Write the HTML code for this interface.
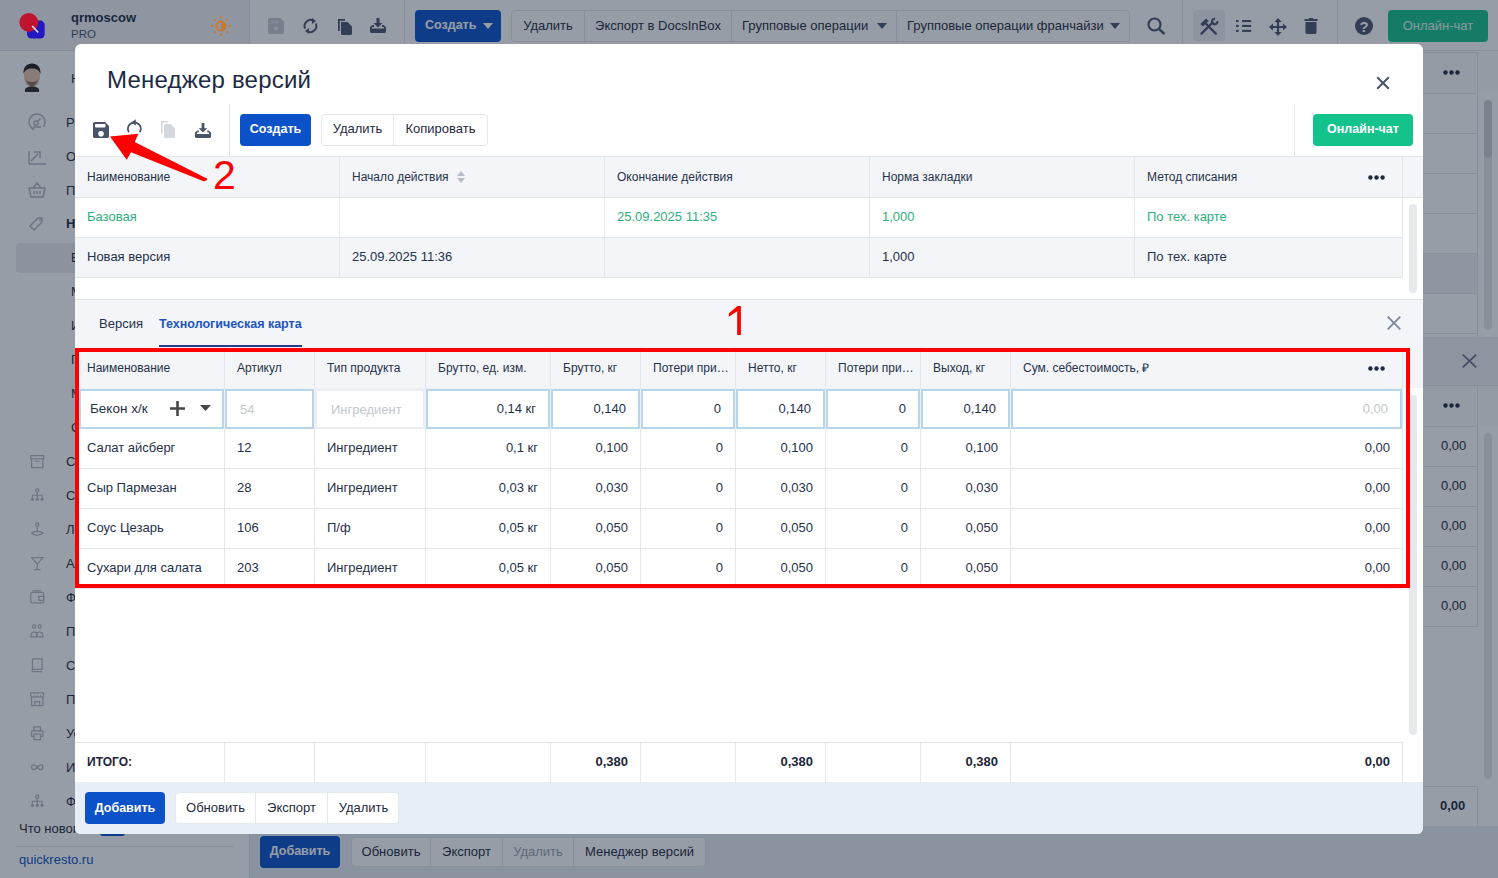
<!DOCTYPE html>
<html><head><meta charset="utf-8">
<style>
*{box-sizing:border-box;margin:0;padding:0}
html,body{width:1498px;height:878px;overflow:hidden}
body{position:relative;font-family:"Liberation Sans",sans-serif;color:#1f2a40;background:#fff}
.a{position:absolute}
.t{position:absolute;white-space:nowrap;line-height:1}
svg{position:absolute;overflow:visible}
#sidebar{position:absolute;left:0;top:0;width:250px;height:878px;background:#fff;border-right:1px solid #dfe3e9}
.si{position:absolute;left:0;width:250px;height:30px;font-size:13px;color:#1f2a40}
.si .tx{position:absolute;left:66px;top:9px;white-space:nowrap;line-height:1}
.si.sub .tx{left:71px}
#overlay{position:absolute;left:0;top:0;width:1498px;height:878px;background:rgba(20,33,55,0.445)}
#modal{position:absolute;left:75px;top:44px;width:1348px;height:790px;background:#fff;border-radius:6px;overflow:hidden}
.btn{position:absolute;height:32px;border-radius:4px;font-size:13px;line-height:32px;text-align:center;white-space:nowrap}
.bblue{background:#0b52c9;color:#fff;font-weight:bold}
.bgrp{position:absolute;height:32px;border:1px solid #e3e6eb;border-radius:4px;background:#fff;font-size:13px;line-height:30px;white-space:nowrap;color:#1f2a40}
.bgrp span{position:absolute;top:0;height:30px;text-align:center}
.bgrp span+span{border-left:1px solid #e3e6eb}
.c{position:absolute;white-space:nowrap;font-size:13px;line-height:1}
.hl{position:absolute;height:1px;background:#e3e6eb}
.vl{position:absolute;width:1px;background:#e3e6eb}
</style></head><body>
<!-- ============ BACKGROUND PAGE ============ -->
<div id="bgpage" class="a" style="left:0;top:0;width:1498px;height:878px">
  <!-- topbar -->
  <div class="a" style="left:250px;top:0;width:1248px;height:51px;background:#fff;border-bottom:1px solid #e3e6eb"></div>
  <div class="vl" style="left:404px;top:0;height:50px"></div>
  <div class="vl" style="left:1182px;top:0;height:50px"></div>
  <div class="vl" style="left:1337px;top:0;height:50px"></div>
  <!-- tb icons -->
  <svg style="left:268px;top:18px" width="16" height="16" viewBox="0 0 16 16"><path d="M0 1.8C0 .8.8 0 1.8 0H12.5l3.5 3.5v10.7c0 1-.8 1.8-1.8 1.8H1.8C.8 16 0 15.2 0 14.2z" fill="#c5cad3"/><rect x="3" y="2.5" width="8" height="3" fill="#fff" opacity=".35"/><circle cx="8" cy="10.5" r="2" fill="#fff" opacity=".5"/></svg>
  <svg style="left:303px;top:17px" width="15" height="18" viewBox="0 0 15 18"><path d="M2.2 11.5A6 6 0 0 1 11 4" stroke="#4a5570" stroke-width="2" fill="none"/><path d="M9 1l4 3-4 3z" fill="#4a5570"/><path d="M12.8 6.5A6 6 0 0 1 4 14" stroke="#4a5570" stroke-width="2" fill="none"/><path d="M6 17l-4-3 4-3z" fill="#4a5570"/></svg>
  <svg style="left:337px;top:18px" width="16" height="17" viewBox="0 0 16 17"><path d="M1 1h7v1.8H2.8V13H1z" fill="#4a5570"/><path d="M4 4h6.5L15 8.5V15.5c0 .8-.6 1.5-1.4 1.5H5.4C4.6 17 4 16.3 4 15.5z" fill="#4a5570"/></svg>
  <svg style="left:370px;top:18px" width="16" height="15" viewBox="0 0 16 15"><path d="M6.5 0h3v5h3L8 9.5 3.5 5h3z" fill="#4a5570"/><path d="M0 9l2.5-2h1.5v2H2.2L1.7 10.5h12.6L13.8 9H12V7h1.5L16 9v4.5c0 .8-.7 1.5-1.5 1.5h-13C.7 15 0 14.3 0 13.5z" fill="#4a5570"/></svg>
  <div class="btn bblue" style="left:415px;top:10px;width:86px;height:32px;line-height:31px;text-align:left;padding-left:10px;font-size:12.5px">Создать<svg style="left:68px;top:13px" width="10" height="6" viewBox="0 0 10 6"><path d="M0 0h10L5 6z" fill="#fff"/></svg></div>
  <div class="bgrp" style="left:511px;top:10px;width:619px;background:#fff">
    <span style="left:0;width:72px">Удалить</span>
    <span style="left:72px;width:147px">Экспорт в DocsInBox</span>
    <span style="left:219px;width:165px;text-align:left;padding-left:10px">Групповые операции<svg style="left:145px;top:12px" width="10" height="6" viewBox="0 0 10 6"><path d="M0 0h10L5 6z" fill="#4a5570"/></svg></span>
    <span style="left:384px;width:234px;text-align:left;padding-left:10px">Групповые операции франчайзи<svg style="left:213px;top:12px" width="10" height="6" viewBox="0 0 10 6"><path d="M0 0h10L5 6z" fill="#4a5570"/></svg></span>
  </div>
  <svg style="left:1147px;top:17px" width="19" height="18" viewBox="0 0 19 18"><circle cx="7.5" cy="7.5" r="6" stroke="#4a5570" stroke-width="2.2" fill="none"/><path d="M12 12l5.5 5" stroke="#4a5570" stroke-width="2.4"/></svg>
  <div class="a" style="left:1193px;top:10px;width:32px;height:31px;background:#eceff3;border-radius:3px"></div>
  <svg style="left:1200px;top:18px" width="19" height="17" viewBox="0 0 19 17"><path d="M15.8 15.6L6 5.8" stroke="#4a5570" stroke-width="2.3" stroke-linecap="round"/><path d="M6.1 0.4L8.6 2.9L2.9 8.6L0.4 6.1z" fill="#4a5570"/><path d="M1.5 15.6L12.6 4.5" stroke="#4a5570" stroke-width="2.3" stroke-linecap="round"/><path d="M17.3 3.1A2.7 2.7 0 1 1 15 0.9" stroke="#4a5570" stroke-width="2.2" fill="none"/></svg>
  <svg style="left:1236px;top:20px" width="16" height="12" viewBox="0 0 16 12"><g fill="#4a5570"><rect x="0" y="0" width="2.6" height="2.1"/><rect x="6" y="0" width="9.2" height="2.1"/><rect x="0" y="4.9" width="2.6" height="2.1"/><rect x="6" y="4.9" width="9.2" height="2.1"/><rect x="0" y="9.8" width="2.6" height="2.1"/><rect x="6" y="9.8" width="9.2" height="2.1"/></g></svg>
  <svg style="left:1268.5px;top:17.5px" width="18" height="18" viewBox="0 0 18 18"><path d="M9 0L12.6 4H10.1V7.9H14V5.4L18 9L14 12.6V10.1H10.1V14H12.6L9 18L5.4 14H7.9V10.1H4V12.6L0 9L4 5.4V7.9H7.9V4H5.4z" fill="#4a5570"/></svg>
  <svg style="left:1304px;top:18px" width="14" height="16" viewBox="0 0 14 16"><rect x="0.5" y="1" width="13" height="2" fill="#4a5570"/><rect x="5" y="0" width="4" height="2" fill="#4a5570"/><path d="M1.5 4h11v10.5c0 .8-.7 1.5-1.5 1.5H3c-.8 0-1.5-.7-1.5-1.5z" fill="#4a5570"/></svg>
  <svg style="left:1355px;top:17px" width="18" height="18" viewBox="0 0 18 18"><circle cx="9" cy="9" r="9" fill="#4a5570"/><text x="9" y="14.5" font-family="Liberation Sans" font-weight="bold" font-size="15" fill="#fff" text-anchor="middle">?</text></svg>
  <div class="btn" style="left:1388px;top:10px;width:100px;background:#14c28c;color:#e6f6ef;font-size:13px;line-height:31px">Онлайн-чат</div>
  <!-- right content area: top table -->
  <div class="a" style="left:250px;top:51px;width:1248px;height:286px;background:#fff"></div>
  <div class="hl" style="left:250px;top:52px;width:1228px"></div>
  <div class="a" style="left:250px;top:53px;width:1248px;height:40px;background:#fafbfc"></div>
  <div class="hl" style="left:250px;top:93px;width:1228px"></div>
  <div class="hl" style="left:250px;top:133px;width:1228px"></div>
  <div class="hl" style="left:250px;top:173px;width:1228px"></div>
  <div class="hl" style="left:250px;top:213px;width:1228px"></div>
  <div class="a" style="left:250px;top:253px;width:1227px;height:40px;background:#f1f3f6"></div>
  <div class="hl" style="left:250px;top:253px;width:1228px"></div>
  <div class="hl" style="left:250px;top:293px;width:1228px"></div>
  <div class="hl" style="left:250px;top:333px;width:1228px"></div>
  <div class="vl" style="left:1477px;top:52px;height:285px"></div>
  <svg style="left:1443px;top:70px" width="17" height="5" viewBox="0 0 17 5"><circle cx="2.5" cy="2.5" r="2.2" fill="#1f2a40"/><circle cx="8.5" cy="2.5" r="2.2" fill="#1f2a40"/><circle cx="14.5" cy="2.5" r="2.2" fill="#1f2a40"/></svg>
  <div class="a" style="left:1484px;top:100px;width:8px;height:230px;background:#e3e6eb;border-radius:4px"></div>
  <div class="a" style="left:1484px;top:100px;width:8px;height:58px;background:#c9ced6;border-radius:4px"></div>
  <!-- right content area: second panel -->
  <div class="a" style="left:250px;top:337px;width:1248px;height:489px;background:#fff"></div>
  <div class="a" style="left:250px;top:337px;width:1248px;height:49px;background:#eff1f4"></div>
  <svg style="left:1462px;top:354px" width="15" height="14" viewBox="0 0 15 14"><path d="M.8 .6l13.4 12.8M14.2 .6L.8 13.4" stroke="#65718a" stroke-width="1.7"/></svg>
  <div class="hl" style="left:250px;top:385px;width:1248px"></div>
  <div class="a" style="left:250px;top:386px;width:1248px;height:40px;background:#fafbfc"></div>
  <div class="hl" style="left:250px;top:426px;width:1228px"></div>
  <div class="hl" style="left:250px;top:466px;width:1228px"></div>
  <div class="hl" style="left:250px;top:506px;width:1228px"></div>
  <div class="hl" style="left:250px;top:546px;width:1228px"></div>
  <div class="hl" style="left:250px;top:586px;width:1228px"></div>
  <div class="hl" style="left:250px;top:626px;width:1228px"></div>
  <div class="vl" style="left:1477px;top:386px;height:240px"></div>
  <svg style="left:1443px;top:403px" width="17" height="5" viewBox="0 0 17 5"><circle cx="2.5" cy="2.5" r="2.2" fill="#1f2a40"/><circle cx="8.5" cy="2.5" r="2.2" fill="#1f2a40"/><circle cx="14.5" cy="2.5" r="2.2" fill="#1f2a40"/></svg>
  <div class="c" style="left:1441px;top:439px">0,00</div>
  <div class="c" style="left:1441px;top:479px">0,00</div>
  <div class="c" style="left:1441px;top:519px">0,00</div>
  <div class="c" style="left:1441px;top:559px">0,00</div>
  <div class="c" style="left:1441px;top:599px">0,00</div>
  <div class="a" style="left:1484px;top:433px;width:8px;height:346px;background:#e3e6eb;border-radius:4px"></div>
  <div class="hl" style="left:250px;top:786px;width:1228px"></div>
  <div class="vl" style="left:1477px;top:786px;height:40px"></div>
  <div class="c" style="left:1440px;top:799px;font-weight:bold">0,00</div>
  <!-- bottom toolbar -->
  <div class="a" style="left:250px;top:826px;width:1248px;height:52px;background:#e8eef5"></div>
  <div class="btn bblue" style="left:260px;top:836px;width:80px;height:32px;font-size:12.5px;line-height:31px">Добавить</div>
  <div class="bgrp" style="left:351px;top:837px;width:355px;height:30px">
    <span style="left:0;width:78px;height:28px;line-height:28px">Обновить</span>
    <span style="left:78px;width:72px;height:28px;line-height:28px">Экспорт</span>
    <span style="left:150px;width:71px;height:28px;line-height:28px;color:#9aa2ae">Удалить</span>
    <span style="left:221px;width:132px;height:28px;line-height:28px">Менеджер версий</span>
  </div>
  <!-- sidebar -->
  <div id="sidebar">
    <div class="a" style="left:0;top:0;width:249px;height:50px;background:#f1f3f6"></div><div class="a" style="left:0;top:50px;width:249px;height:1px;background:#dde1e7"></div>
    
    <div class="t" style="left:71px;top:11px;font-size:13px;font-weight:bold;color:#1c2b45">qrmoscow</div>
    <div class="t" style="left:71px;top:29px;font-size:11.5px;color:#46526a">PRO</div>
    
    <!-- avatar -->
    <svg style="left:22px;top:63px" width="20" height="29" viewBox="0 0 20 29"><path d="M2 9C2 3 6 1 10 1s8 2 8 8v4c0 6-3 11-8 11S2 19 2 13z" fill="#e6c3ad"/><path d="M1.5 11C1 4 5 0.5 10 0.5S19 4 18.5 11C17 7 15 5.5 10 5.5S3 7 1.5 11z" fill="#231d1b"/><path d="M3.5 15c1 5 3.5 8 6.5 8s5.5-3 6.5-8c-1 3-3 4-6.5 4s-5.5-1-6.5-4z" fill="#8a6a5c"/><path d="M3 26c2-2 4-2.5 7-2.5s5 .5 7 2.5v3H3z" fill="#2b2a2e"/></svg>
    <div class="t" style="left:71px;top:72px;font-size:13px">Никита Петров</div>
    <div class="si" style="top:107px"><svg style="left:28px;top:6px" width="18" height="18" viewBox="0 0 18 18"><circle cx="9" cy="9" r="8" stroke="#b0b7c1" stroke-width="1.5" fill="none" stroke-dasharray="40 10" transform="rotate(110 9 9)"/><circle cx="8" cy="10" r="2" stroke="#b0b7c1" stroke-width="1.5" fill="none"/><path d="M9.5 8.5l3-3M5 14h8" stroke="#b0b7c1" stroke-width="1.5"/></svg><div class="tx" style="">Рабочий стол</div></div>
    <div class="si" style="top:141px"><svg style="left:28px;top:6px" width="18" height="18" viewBox="0 0 18 18"><path d="M1 17V4M1 17h17M3 14l7-7M6 5h6v6" stroke="#b0b7c1" stroke-width="1.5" fill="none"/></svg><div class="tx" style="">Отчёты</div></div>
    <div class="si" style="top:175px"><svg style="left:28px;top:6px" width="18" height="18" viewBox="0 0 18 18"><path d="M1 7h16l-2 9H3z M5 7l4-5 4 5M6 10v3M9 10v3M12 10v3" stroke="#b0b7c1" stroke-width="1.5" fill="none"/></svg><div class="tx" style="">Продажи</div></div>
    <div class="si" style="top:208px"><svg style="left:28px;top:6px" width="18" height="18" viewBox="0 0 18 18"><path d="M2 12l8-8h4v4l-8 8z" stroke="#b0b7c1" stroke-width="1.5" fill="none"/><circle cx="12" cy="6" r="1" fill="#b0b7c1"/></svg><div class="tx" style="font-weight:bold;">Номенклатура</div></div>
    <div class="a" style="left:16px;top:243px;width:234px;height:30px;background:#eaedf2;border-radius:4px 0 0 4px"></div>
    <div class="si sub" style="top:242px"><div class="tx" style="">Блюда и товары</div></div>
    <div class="si sub" style="top:276px"><div class="tx" style="">Модификаторы</div></div>
    <div class="si sub" style="top:310px"><div class="tx" style="">Ингредиенты</div></div>
    <div class="si sub" style="top:344px"><div class="tx" style="">Полуфабрикаты</div></div>
    <div class="si sub" style="top:378px"><div class="tx" style="">Меню</div></div>
    <div class="si sub" style="top:412px"><div class="tx" style="">Списки</div></div>
    <div class="si" style="top:446px"><svg style="left:30px;top:8px" width="14.5" height="14.5" viewBox="0 0 18 18"><rect x="1" y="2" width="16" height="4" stroke="#b0b7c1" stroke-width="1.5" fill="none"/><path d="M2 6v11h14V6M6 9h6" stroke="#b0b7c1" stroke-width="1.5" fill="none"/></svg><div class="tx" style="">Склад</div></div>
    <div class="si" style="top:480px"><svg style="left:30px;top:8px" width="14.5" height="14.5" viewBox="0 0 18 18"><circle cx="9" cy="3" r="2" stroke="#b0b7c1" stroke-width="1.5" fill="none"/><path d="M9 5v4M3 12V9h12v3M9 9v3" stroke="#b0b7c1" stroke-width="1.5" fill="none"/><circle cx="3" cy="14" r="2" fill="#b0b7c1"/><circle cx="9" cy="14" r="2" fill="#b0b7c1"/><circle cx="15" cy="14" r="2" fill="#b0b7c1"/></svg><div class="tx" style="">Структура</div></div>
    <div class="si" style="top:514px"><svg style="left:30px;top:8px" width="14.5" height="14.5" viewBox="0 0 18 18"><circle cx="9" cy="3" r="2" stroke="#b0b7c1" stroke-width="1.5" fill="none"/><path d="M9 6v6M2 14c3-3 11-3 14 0-3 3-11 3-14 0z" stroke="#b0b7c1" stroke-width="1.5" fill="none"/></svg><div class="tx" style="">Лояльность</div></div>
    <div class="si" style="top:548px"><svg style="left:30px;top:8px" width="14.5" height="14.5" viewBox="0 0 18 18"><path d="M2 2h14L9 10zM9 10v6M5 17h8" stroke="#b0b7c1" stroke-width="1.5" fill="none"/></svg><div class="tx" style="">Алкоголь</div></div>
    <div class="si" style="top:582px"><svg style="left:30px;top:8px" width="14.5" height="14.5" viewBox="0 0 18 18"><rect x="1" y="3" width="16" height="13" rx="2" stroke="#b0b7c1" stroke-width="1.5" fill="none"/><path d="M3 1h11M11 8h6v5h-6z" stroke="#b0b7c1" stroke-width="1.5" fill="none"/></svg><div class="tx" style="">Финансы</div></div>
    <div class="si" style="top:616px"><svg style="left:30px;top:8px" width="14.5" height="14.5" viewBox="0 0 18 18"><circle cx="5" cy="3" r="2" stroke="#b0b7c1" stroke-width="1.5" fill="none"/><circle cx="12" cy="3" r="2" stroke="#b0b7c1" stroke-width="1.5" fill="none"/><path d="M1 16c0-8 8-8 8 0zM8 16c0-8 8-8 8 0z" stroke="#b0b7c1" stroke-width="1.5" fill="none"/></svg><div class="tx" style="">Персонал</div></div>
    <div class="si" style="top:650px"><svg style="left:30px;top:8px" width="14.5" height="14.5" viewBox="0 0 18 18"><path d="M3 1h12v13H4a1.5 1.5 0 0 0 0 3h11M3 1v14.5" stroke="#b0b7c1" stroke-width="1.5" fill="none"/></svg><div class="tx" style="">Справочники</div></div>
    <div class="si" style="top:684px"><svg style="left:30px;top:8px" width="14.5" height="14.5" viewBox="0 0 18 18"><path d="M1 1h16v4c0 2-3 2-4 0-1 2-3 2-4 0-1 2-3 2-4 0-1 2-4 2-4 0zM2 6v11h14V6M6 17v-5h6v5" stroke="#b0b7c1" stroke-width="1.5" fill="none"/></svg><div class="tx" style="">Предприятие</div></div>
    <div class="si" style="top:718px"><svg style="left:30px;top:8px" width="14.5" height="14.5" viewBox="0 0 18 18"><path d="M5 6V1h8v5M2 6h14v7h-3M5 13H2V6M5 10h8v7H5z" stroke="#b0b7c1" stroke-width="1.5" fill="none"/></svg><div class="tx" style="">Устройства</div></div>
    <div class="si" style="top:752px"><svg style="left:30px;top:8px" width="14.5" height="14.5" viewBox="0 0 18 18"><path d="M9 9c-3-4-7-4-7 0s4 4 7 0 7-4 7 0-4 4-7 0z" stroke="#b0b7c1" stroke-width="1.6" fill="none"/></svg><div class="tx" style="">Интеграции</div></div>
    <div class="si" style="top:786px"><svg style="left:30px;top:8px" width="14.5" height="14.5" viewBox="0 0 18 18"><circle cx="9" cy="3" r="2" stroke="#b0b7c1" stroke-width="1.5" fill="none"/><path d="M9 5v4M3 12V9h12v3M9 9v3" stroke="#b0b7c1" stroke-width="1.5" fill="none"/><circle cx="3" cy="14" r="2" fill="#b0b7c1"/><circle cx="9" cy="14" r="2" fill="#b0b7c1"/><circle cx="15" cy="14" r="2" fill="#b0b7c1"/></svg><div class="tx" style="">Франчайзи</div></div>
    <div class="t" style="left:19px;top:822px;font-size:13px">Что нового</div>
    <div class="a" style="left:100px;top:820px;width:25px;height:16px;border-radius:3px;background:#0b52c9"></div>
    <div class="hl" style="left:16px;top:846px;width:218px"></div>
    <div class="t" style="left:19px;top:853px;font-size:13px;color:#0b4fc2">quickresto.ru</div>
  </div>
</div>

<div id="overlay"></div>
<svg style="left:19px;top:12px" width="27" height="28" viewBox="0 0 27 28"><rect x="8" y="8.6" width="17.7" height="18" rx="4.5" fill="#2418c0"/><circle cx="9.8" cy="10.4" r="9.4" fill="#c0132f"/><path d="M13.2 14l6 6.5" stroke="#d5d8e0" stroke-width="1.8"/></svg>
<svg style="left:211px;top:16px" width="20" height="20" viewBox="0 0 20 20"><g fill="#c97a2a"><circle cx="10" cy="1.3" r="1.2"/><circle cx="10" cy="18.7" r="1.2"/><circle cx="1.3" cy="10" r="1.2"/><circle cx="18.7" cy="10" r="1.2"/><circle cx="3.8" cy="3.8" r="1.1"/><circle cx="16.2" cy="3.8" r="1.1"/><circle cx="3.8" cy="16.2" r="1.1"/><circle cx="16.2" cy="16.2" r="1.1"/></g><circle cx="10" cy="10" r="4.6" stroke="#c97a2a" stroke-width="1.6" fill="none"/><path d="M10 5.4a4.6 4.6 0 0 1 0 9.2z" fill="#c97a2a"/></svg>

<div id="modal">
<div class="a" style="left:-75px;top:-44px;width:1498px;height:878px">
<div class="t" style="left:107px;top:68px;font-size:24px;color:#1c2b45;letter-spacing:0.2px">Менеджер версий</div>
<svg style="left:1376px;top:76px" width="14" height="14" viewBox="0 0 14 14"><path d="M1.2 1.2l11.6 11.6M12.8 1.2L1.2 12.8" stroke="#4a5468" stroke-width="2"/></svg>
<svg style="left:93px;top:122px" width="16" height="16" viewBox="0 0 16 16"><path d="M0 1.8C0 .8.8 0 1.8 0H12l4 4v10.2c0 1-.8 1.8-1.8 1.8H1.8C.8 16 0 15.2 0 14.2z" fill="#4a5468"/><rect x="2" y="2" width="10.5" height="3.4" rx=".8" fill="#fff"/><circle cx="8" cy="11.8" r="2.8" fill="#fff"/></svg>
<svg style="left:0;top:0" width="220" height="160" viewBox="0 0 220 160"><path d="M139.8 132.2A6.4 6.4 0 1 0 128.9 132.2" stroke="#4a5468" stroke-width="1.9" fill="none"/><path d="M131.2 122.4L135.8 119.3V125.6z" fill="#4a5468"/></svg>
<svg style="left:161px;top:121px" width="15" height="17" viewBox="0 0 15 17"><path d="M0 0h7v1.6H1.6V12H0z" fill="#d3d7de"/><path d="M3 3h6.5L14 7.5V15.6c0 .8-.6 1.4-1.4 1.4H4.4C3.6 17 3 16.4 3 15.6z" fill="#d3d7de"/></svg>
<svg style="left:195px;top:123px" width="16" height="15" viewBox="0 0 16 15"><path d="M6.6 0h2.8v5.2h3L8 9.6 3.6 5.2h3z" fill="#4a5468"/><path d="M0 9.5L2.4 7.5h1.4v1.8H2.4L1.8 11h12.4l-.6-1.7h-1.4V7.5h1.4L16 9.5v4c0 .8-.7 1.5-1.5 1.5h-13C.7 15 0 14.3 0 13.5z" fill="#4a5468"/></svg>
<div class="a" style="left:229px;top:104px;width:1px;height:52px;background:#e3e6eb;"></div>
<div class="a" style="left:1294px;top:104px;width:1px;height:52px;background:#e3e6eb;"></div>
<div class="btn bblue" style="left:240px;top:114px;width:71px;height:32px;line-height:30px;font-size:12.5px">Создать</div>
<div class="bgrp" style="left:321px;top:114px;width:167px;height:32px;line-height:28px"><span style="left:0;width:71px">Удалить</span><span style="left:71px;width:94px">Копировать</span></div>
<div class="btn" style="left:1313px;top:114px;width:100px;height:32px;line-height:30px;background:#14c28c;color:#fff;font-weight:bold;font-size:12.5px">Онлайн-чат</div>
<div class="a" style="left:75px;top:156px;width:1348px;height:1px;background:#e3e6eb;"></div>
<div class="a" style="left:75px;top:157px;width:1348px;height:40px;background:#f3f5f8;"></div>
<div class="a" style="left:75px;top:197px;width:1348px;height:1px;background:#e3e6eb;"></div>
<div class="a" style="left:75px;top:237px;width:1327px;height:1px;background:#e3e6eb;"></div>
<div class="a" style="left:75px;top:238px;width:1327px;height:39px;background:#f3f5f8;"></div>
<div class="a" style="left:75px;top:277px;width:1327px;height:1px;background:#e3e6eb;"></div>
<div class="a" style="left:339px;top:157px;width:1px;height:120px;background:#e3e6eb;"></div>
<div class="a" style="left:604px;top:157px;width:1px;height:120px;background:#e3e6eb;"></div>
<div class="a" style="left:869px;top:157px;width:1px;height:120px;background:#e3e6eb;"></div>
<div class="a" style="left:1134px;top:157px;width:1px;height:120px;background:#e3e6eb;"></div>
<div class="a" style="left:1402px;top:157px;width:1px;height:120px;background:#e3e6eb;"></div>
<div class="t" style="left:87px;top:171.22px;font-size:12px;color:#26314a;">Наименование</div>
<div class="t" style="left:352px;top:171.22px;font-size:12px;color:#26314a;">Начало действия</div>
<svg style="left:457px;top:171px" width="8" height="12" viewBox="0 0 8 12"><path d="M0 5h8L4 0zM0 7h8l-4 5z" fill="#b7bdc7"/></svg>
<div class="t" style="left:617px;top:171.22px;font-size:12px;color:#26314a;">Окончание действия</div>
<div class="t" style="left:882px;top:171.22px;font-size:12px;color:#26314a;">Норма закладки</div>
<div class="t" style="left:1147px;top:171.22px;font-size:12px;color:#26314a;">Метод списания</div>
<svg style="left:1368px;top:175px" width="17" height="5" viewBox="0 0 17 5"><circle cx="2.4" cy="2.5" r="2.2" fill="#1f2a40"/><circle cx="8.5" cy="2.5" r="2.2" fill="#1f2a40"/><circle cx="14.6" cy="2.5" r="2.2" fill="#1f2a40"/></svg>
<div class="t" style="left:87px;top:209.73px;font-size:13px;color:#2eae7e;">Базовая</div>
<div class="t" style="left:617px;top:209.73px;font-size:13px;color:#2eae7e;">25.09.2025 11:35</div>
<div class="t" style="left:882px;top:209.73px;font-size:13px;color:#2eae7e;">1,000</div>
<div class="t" style="left:1147px;top:209.73px;font-size:13px;color:#2eae7e;">По тех. карте</div>
<div class="t" style="left:87px;top:249.73px;font-size:13px;color:#26314a;">Новая версия</div>
<div class="t" style="left:352px;top:249.73px;font-size:13px;color:#26314a;">25.09.2025 11:36</div>
<div class="t" style="left:882px;top:249.73px;font-size:13px;color:#26314a;">1,000</div>
<div class="t" style="left:1147px;top:249.73px;font-size:13px;color:#26314a;">По тех. карте</div>
<div class="a" style="left:1409px;top:204px;width:8px;height:89px;background:#e6e9ee;border-radius:4px"></div>
<div class="a" style="left:75px;top:299px;width:1348px;height:1px;background:#e1e4e9;"></div>
<div class="a" style="left:75px;top:300px;width:1348px;height:47px;background:#f3f5f8;"></div>
<div class="t" style="left:99px;top:316.73px;font-size:13px;color:#26314a;">Версия</div>
<div class="t" style="left:159px;top:317.98px;font-size:12.5px;color:#1d55c0;font-weight:bold;">Технологическая карта</div>
<div class="a" style="left:159px;top:345px;width:143px;height:2px;background:#2b3a8f;"></div>
<svg style="left:1387px;top:316px" width="14" height="14" viewBox="0 0 14 14"><path d="M.7 .7l12.6 12.6M13.3 .7L.7 13.3" stroke="#7d8797" stroke-width="1.8"/></svg>
<div class="a" style="left:75px;top:347px;width:1348px;height:41px;background:#f3f5f8;"></div>
<div class="a" style="left:75px;top:388px;width:1327px;height:1px;background:#e3e6eb;"></div>
<div class="a" style="left:75px;top:428px;width:1327px;height:1px;background:#e3e6eb;"></div>
<div class="a" style="left:75px;top:468px;width:1327px;height:1px;background:#e3e6eb;"></div>
<div class="a" style="left:75px;top:508px;width:1327px;height:1px;background:#e3e6eb;"></div>
<div class="a" style="left:75px;top:548px;width:1327px;height:1px;background:#e3e6eb;"></div>
<div class="a" style="left:75px;top:588px;width:1327px;height:1px;background:#e3e6eb;"></div>
<div class="a" style="left:224px;top:347px;width:1px;height:241px;background:#e3e6eb;"></div>
<div class="a" style="left:314px;top:347px;width:1px;height:241px;background:#e3e6eb;"></div>
<div class="a" style="left:425px;top:347px;width:1px;height:241px;background:#e3e6eb;"></div>
<div class="a" style="left:550px;top:347px;width:1px;height:241px;background:#e3e6eb;"></div>
<div class="a" style="left:640px;top:347px;width:1px;height:241px;background:#e3e6eb;"></div>
<div class="a" style="left:735px;top:347px;width:1px;height:241px;background:#e3e6eb;"></div>
<div class="a" style="left:825px;top:347px;width:1px;height:241px;background:#e3e6eb;"></div>
<div class="a" style="left:920px;top:347px;width:1px;height:241px;background:#e3e6eb;"></div>
<div class="a" style="left:1010px;top:347px;width:1px;height:241px;background:#e3e6eb;"></div>
<div class="a" style="left:1402px;top:347px;width:1px;height:241px;background:#e3e6eb;"></div>
<div class="t" style="left:87px;top:362.22px;font-size:12px;color:#26314a;">Наименование</div>
<div class="t" style="left:237px;top:362.22px;font-size:12px;color:#26314a;">Артикул</div>
<div class="t" style="left:327px;top:362.22px;font-size:12px;color:#26314a;">Тип продукта</div>
<div class="t" style="left:438px;top:362.22px;font-size:12px;color:#26314a;">Брутто, ед. изм.</div>
<div class="t" style="left:563px;top:362.22px;font-size:12px;color:#26314a;">Брутто, кг</div>
<div class="t" style="left:653px;top:362.22px;font-size:12px;color:#26314a;">Потери при…</div>
<div class="t" style="left:748px;top:362.22px;font-size:12px;color:#26314a;">Нетто, кг</div>
<div class="t" style="left:838px;top:362.22px;font-size:12px;color:#26314a;">Потери при…</div>
<div class="t" style="left:933px;top:362.22px;font-size:12px;color:#26314a;">Выход, кг</div>
<div class="t" style="left:1023px;top:362.22px;font-size:12px;color:#26314a;">Сум. себестоимость, ₽</div>
<svg style="left:1368px;top:366px" width="17" height="5" viewBox="0 0 17 5"><circle cx="2.4" cy="2.5" r="2.2" fill="#1f2a40"/><circle cx="8.5" cy="2.5" r="2.2" fill="#1f2a40"/><circle cx="14.6" cy="2.5" r="2.2" fill="#1f2a40"/></svg>
<div class="a" style="left:75px;top:388px;width:1327px;height:40px;background:#eef0f3;"></div>
<div class="a" style="left:79px;top:389px;width:145px;height:40px;background:#fff;border:2px solid #b8d6ea"></div>
<div class="a" style="left:225px;top:389px;width:89px;height:40px;background:#fff;border:2px solid #b8d6ea"></div>
<div class="a" style="left:315px;top:389px;width:110px;height:40px;background:#fff;border:2px solid #eceef1"></div>
<div class="a" style="left:426px;top:389px;width:124px;height:40px;background:#fff;border:2px solid #b8d6ea"></div>
<div class="a" style="left:551px;top:389px;width:89px;height:40px;background:#fff;border:2px solid #b8d6ea"></div>
<div class="a" style="left:641px;top:389px;width:94px;height:40px;background:#fff;border:2px solid #b8d6ea"></div>
<div class="a" style="left:736px;top:389px;width:89px;height:40px;background:#fff;border:2px solid #b8d6ea"></div>
<div class="a" style="left:826px;top:389px;width:94px;height:40px;background:#fff;border:2px solid #b8d6ea"></div>
<div class="a" style="left:921px;top:389px;width:89px;height:40px;background:#fff;border:2px solid #b8d6ea"></div>
<div class="a" style="left:1011px;top:389px;width:391px;height:40px;background:#fff;border:2px solid #b8d6ea"></div>
<div class="t" style="left:90px;top:401.99px;font-size:13.5px;color:#26314a;">Бекон х/к</div>
<svg style="left:170px;top:401px" width="15" height="15" viewBox="0 0 15 15"><path d="M6.2 0h2.6v15H6.2zM0 6.2h15v2.6H0z" fill="#454649"/></svg>
<svg style="left:199.5px;top:405px" width="11" height="6" viewBox="0 0 11 6"><path d="M0 0h11L5.5 6z" fill="#454649"/></svg>
<div class="t" style="left:240px;top:403.03px;font-size:13px;color:#c3c7ce;">54</div>
<div class="t" style="left:331px;top:403.03px;font-size:13px;color:#c3c7ce;">Ингредиент</div>
<div class="t" style="right:962px;top:401.73px;font-size:13px;color:#26314a;">0,14 кг</div>
<div class="t" style="right:872px;top:401.73px;font-size:13px;color:#26314a;">0,140</div>
<div class="t" style="right:777px;top:401.73px;font-size:13px;color:#26314a;">0</div>
<div class="t" style="right:687px;top:401.73px;font-size:13px;color:#26314a;">0,140</div>
<div class="t" style="right:592px;top:401.73px;font-size:13px;color:#26314a;">0</div>
<div class="t" style="right:502px;top:401.73px;font-size:13px;color:#26314a;">0,140</div>
<div class="t" style="right:110px;top:401.73px;font-size:13px;color:#c3c7ce;">0,00</div>
<div class="t" style="left:87px;top:440.73px;font-size:13px;color:#26314a;">Салат айсберг</div>
<div class="t" style="left:237px;top:440.73px;font-size:13px;color:#26314a;">12</div>
<div class="t" style="left:327px;top:440.73px;font-size:13px;color:#26314a;">Ингредиент</div>
<div class="t" style="right:960px;top:440.73px;font-size:13px;color:#26314a;">0,1 кг</div>
<div class="t" style="right:870px;top:440.73px;font-size:13px;color:#26314a;">0,100</div>
<div class="t" style="right:775px;top:440.73px;font-size:13px;color:#26314a;">0</div>
<div class="t" style="right:685px;top:440.73px;font-size:13px;color:#26314a;">0,100</div>
<div class="t" style="right:590px;top:440.73px;font-size:13px;color:#26314a;">0</div>
<div class="t" style="right:500px;top:440.73px;font-size:13px;color:#26314a;">0,100</div>
<div class="t" style="right:108px;top:440.73px;font-size:13px;color:#26314a;">0,00</div>
<div class="t" style="left:87px;top:480.73px;font-size:13px;color:#26314a;">Сыр Пармезан</div>
<div class="t" style="left:237px;top:480.73px;font-size:13px;color:#26314a;">28</div>
<div class="t" style="left:327px;top:480.73px;font-size:13px;color:#26314a;">Ингредиент</div>
<div class="t" style="right:960px;top:480.73px;font-size:13px;color:#26314a;">0,03 кг</div>
<div class="t" style="right:870px;top:480.73px;font-size:13px;color:#26314a;">0,030</div>
<div class="t" style="right:775px;top:480.73px;font-size:13px;color:#26314a;">0</div>
<div class="t" style="right:685px;top:480.73px;font-size:13px;color:#26314a;">0,030</div>
<div class="t" style="right:590px;top:480.73px;font-size:13px;color:#26314a;">0</div>
<div class="t" style="right:500px;top:480.73px;font-size:13px;color:#26314a;">0,030</div>
<div class="t" style="right:108px;top:480.73px;font-size:13px;color:#26314a;">0,00</div>
<div class="t" style="left:87px;top:520.73px;font-size:13px;color:#26314a;">Соус Цезарь</div>
<div class="t" style="left:237px;top:520.73px;font-size:13px;color:#26314a;">106</div>
<div class="t" style="left:327px;top:520.73px;font-size:13px;color:#26314a;">П/ф</div>
<div class="t" style="right:960px;top:520.73px;font-size:13px;color:#26314a;">0,05 кг</div>
<div class="t" style="right:870px;top:520.73px;font-size:13px;color:#26314a;">0,050</div>
<div class="t" style="right:775px;top:520.73px;font-size:13px;color:#26314a;">0</div>
<div class="t" style="right:685px;top:520.73px;font-size:13px;color:#26314a;">0,050</div>
<div class="t" style="right:590px;top:520.73px;font-size:13px;color:#26314a;">0</div>
<div class="t" style="right:500px;top:520.73px;font-size:13px;color:#26314a;">0,050</div>
<div class="t" style="right:108px;top:520.73px;font-size:13px;color:#26314a;">0,00</div>
<div class="t" style="left:87px;top:560.73px;font-size:13px;color:#26314a;">Сухари для салата</div>
<div class="t" style="left:237px;top:560.73px;font-size:13px;color:#26314a;">203</div>
<div class="t" style="left:327px;top:560.73px;font-size:13px;color:#26314a;">Ингредиент</div>
<div class="t" style="right:960px;top:560.73px;font-size:13px;color:#26314a;">0,05 кг</div>
<div class="t" style="right:870px;top:560.73px;font-size:13px;color:#26314a;">0,050</div>
<div class="t" style="right:775px;top:560.73px;font-size:13px;color:#26314a;">0</div>
<div class="t" style="right:685px;top:560.73px;font-size:13px;color:#26314a;">0,050</div>
<div class="t" style="right:590px;top:560.73px;font-size:13px;color:#26314a;">0</div>
<div class="t" style="right:500px;top:560.73px;font-size:13px;color:#26314a;">0,050</div>
<div class="t" style="right:108px;top:560.73px;font-size:13px;color:#26314a;">0,00</div>
<div class="a" style="left:1409px;top:395px;width:8px;height:340px;background:#e6e9ee;border-radius:4px"></div>
<div class="a" style="left:75px;top:742px;width:1327px;height:1px;background:#e3e6eb;"></div>
<div class="a" style="left:224px;top:742px;width:1px;height:40px;background:#e3e6eb;"></div>
<div class="a" style="left:314px;top:742px;width:1px;height:40px;background:#e3e6eb;"></div>
<div class="a" style="left:425px;top:742px;width:1px;height:40px;background:#e3e6eb;"></div>
<div class="a" style="left:550px;top:742px;width:1px;height:40px;background:#e3e6eb;"></div>
<div class="a" style="left:640px;top:742px;width:1px;height:40px;background:#e3e6eb;"></div>
<div class="a" style="left:735px;top:742px;width:1px;height:40px;background:#e3e6eb;"></div>
<div class="a" style="left:825px;top:742px;width:1px;height:40px;background:#e3e6eb;"></div>
<div class="a" style="left:920px;top:742px;width:1px;height:40px;background:#e3e6eb;"></div>
<div class="a" style="left:1010px;top:742px;width:1px;height:40px;background:#e3e6eb;"></div>
<div class="a" style="left:1402px;top:742px;width:1px;height:40px;background:#e3e6eb;"></div>
<div class="t" style="left:87px;top:756.22px;font-size:12px;color:#1c2638;font-weight:bold;">ИТОГО:</div>
<div class="t" style="right:870px;top:754.73px;font-size:13px;color:#1c2638;font-weight:bold;">0,380</div>
<div class="t" style="right:685px;top:754.73px;font-size:13px;color:#1c2638;font-weight:bold;">0,380</div>
<div class="t" style="right:500px;top:754.73px;font-size:13px;color:#1c2638;font-weight:bold;">0,380</div>
<div class="t" style="right:108px;top:754.73px;font-size:13px;color:#1c2638;font-weight:bold;">0,00</div>
<div class="a" style="left:75px;top:782px;width:1348px;height:52px;background:#e8eef5;"></div>
<div class="btn bblue" style="left:85px;top:792px;width:80px;height:32px;line-height:32px;font-size:12.5px">Добавить</div>
<div class="bgrp" style="left:175px;top:792px;width:224px;height:32px;border-color:#e4e9ef"><span style="left:0;width:79px">Обновить</span><span style="left:79px;width:72px">Экспорт</span><span style="left:151px;width:72px">Удалить</span></div>
<div class="a" style="left:75px;top:348px;width:1335px;height:240px;border:4px solid #ff0000"></div>
<svg style="left:0;top:0" width="760" height="340" viewBox="0 0 760 340"><path d="M740.9 306.1V335H737.2V311.2L728.9 316.8V313.2L737.6 306.1z" fill="#ff0000"/></svg>
<div class="t" style="left:213px;top:155px;font-size:41px;color:#ff0000">2</div>
<svg style="left:0;top:0" width="260" height="200" viewBox="0 0 260 200"><path d="M110 136.5L138.4 133.7L134.7 142L206.8 178.4Q208.5 180.5 203.6 181.2L131 152.2L126.7 159.7z" fill="#ff0000"/></svg>
</div>
</div>
</body></html>
